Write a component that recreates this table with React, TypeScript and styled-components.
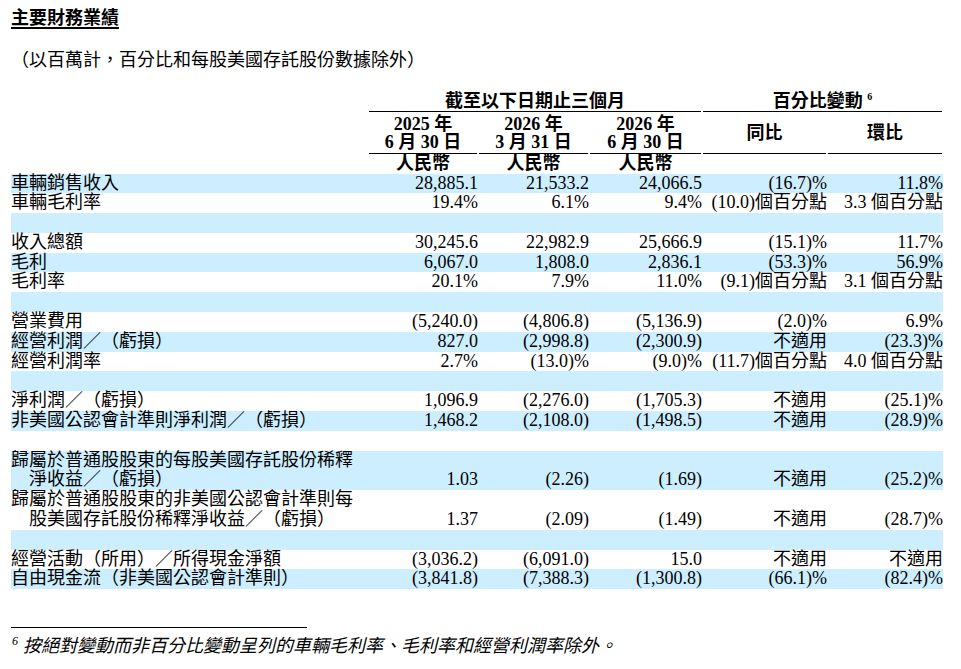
import React from "react";
import styled, { createGlobalStyle } from "styled-components";

type RowData = {
  label: string[];
  values: string[];
};

const COLS = "357px 110px 111px 113px 125px 116px";
const LINE = "19.8px";

const rows: RowData[] = [
  { label: ["車輛銷售收入"], values: ["28,885.1", "21,533.2", "24,066.5", "(16.7)%", "11.8%"] },
  { label: ["車輛毛利率"], values: ["19.4%", "6.1%", "9.4%", "(10.0)個百分點", "3.3 個百分點"] },
  { label: [], values: [] },
  { label: ["收入總額"], values: ["30,245.6", "22,982.9", "25,666.9", "(15.1)%", "11.7%"] },
  { label: ["毛利"], values: ["6,067.0", "1,808.0", "2,836.1", "(53.3)%", "56.9%"] },
  { label: ["毛利率"], values: ["20.1%", "7.9%", "11.0%", "(9.1)個百分點", "3.1 個百分點"] },
  { label: [], values: [] },
  { label: ["營業費用"], values: ["(5,240.0)", "(4,806.8)", "(5,136.9)", "(2.0)%", "6.9%"] },
  { label: ["經營利潤／（虧損）"], values: ["827.0", "(2,998.8)", "(2,300.9)", "不適用", "(23.3)%"] },
  { label: ["經營利潤率"], values: ["2.7%", "(13.0)%", "(9.0)%", "(11.7)個百分點", "4.0 個百分點"] },
  { label: [], values: [] },
  { label: ["淨利潤／（虧損）"], values: ["1,096.9", "(2,276.0)", "(1,705.3)", "不適用", "(25.1)%"] },
  { label: ["非美國公認會計準則淨利潤／（虧損）"], values: ["1,468.2", "(2,108.0)", "(1,498.5)", "不適用", "(28.9)%"] },
  { label: [], values: [] },
  {
    label: ["歸屬於普通股股東的每股美國存託股份稀釋", "淨收益／（虧損）"],
    values: ["1.03", "(2.26)", "(1.69)", "不適用", "(25.2)%"],
  },
  {
    label: ["歸屬於普通股股東的非美國公認會計準則每", "股美國存託股份稀釋淨收益／（虧損）"],
    values: ["1.37", "(2.09)", "(1.49)", "不適用", "(28.7)%"],
  },
  { label: [], values: [] },
  { label: ["經營活動（所用）／所得現金淨額"], values: ["(3,036.2)", "(6,091.0)", "15.0", "不適用", "不適用"] },
  { label: ["自由現金流（非美國公認會計準則）"], values: ["(3,841.8)", "(7,388.3)", "(1,300.8)", "(66.1)%", "(82.4)%"] },
];

const periods = [
  ["2025 年", "6 月 30 日"],
  ["2026 年", "3 月 31 日"],
  ["2026 年", "6 月 30 日"],
];

const App: React.FC = () => {
  return (
    <>
      <GlobalStyle />
      <Page>
        <Title>主要財務業績</Title>
        <Subtitle>（以百萬計，百分比和每股美國存託股份數據除外）</Subtitle>

        <Header>
          <HeadRow $height="20px">
            <HeadCell />
            <HeadCell $span={3} $lined>
              <span>截至以下日期止三個月</span>
            </HeadCell>
            <HeadCell $span={2} $lined>
              <span>
                百分比變動 <Sup>6</Sup>
              </span>
            </HeadCell>
          </HeadRow>
          <HeadRow $height="39px" $pad>
            <HeadCell />
            {periods.map((p, i) => (
              <HeadCell key={i} $lined>
                <PeriodLine>{p[0]}</PeriodLine>
                <PeriodLine>{p[1]}</PeriodLine>
              </HeadCell>
            ))}
            <HeadCell $lined>同比</HeadCell>
            <HeadCell $lined>環比</HeadCell>
          </HeadRow>
          <HeadRow $height="20px">
            <HeadCell />
            <HeadCell>人民幣</HeadCell>
            <HeadCell>人民幣</HeadCell>
            <HeadCell>人民幣</HeadCell>
            <HeadCell />
            <HeadCell />
          </HeadRow>
        </Header>

        {rows.map((row, i) => (
          <Row key={i} $shade={i % 2 === 0}>
            <Label>
              {row.label.map((line, j) => (
                <LabelLine key={j} $indent={j > 0}>
                  {line}
                </LabelLine>
              ))}
            </Label>
            {row.values.map((v, j) => (
              <Value key={j}>{v}</Value>
            ))}
          </Row>
        ))}

        <FootRule />
        <FootText>
          <FootSup>6</FootSup>
          按絕對變動而非百分比變動呈列的車輛毛利率、毛利率和經營利潤率除外。
        </FootText>
      </Page>
    </>
  );
};

const GlobalStyle = createGlobalStyle`
  html, body {
    margin: 0;
    padding: 0;
    background: #fff;
  }
  body {
    font-family: "Liberation Serif", "Noto Sans CJK TC", serif;
    color: #000;
    font-size: 18px;
  }
`;

const Page = styled.div`
  width: 932px;
  padding-left: 11px;
`;

const Title = styled.div`
  margin-top: 8px;
  line-height: 20px;
  font-weight: bold;
  text-decoration: underline;
  text-decoration-thickness: 1.5px;
  text-underline-offset: 3px;
`;

const Subtitle = styled.div`
  margin-top: 22px;
  line-height: 20px;
`;

const Header = styled.div`
  margin-top: 21px;
`;

const HeadRow = styled.div<{ $pad?: boolean; $height: string }>`
  display: grid;
  grid-template-columns: ${COLS};
  line-height: 19px;
  padding-top: ${(p) => (p.$pad ? "1.5px" : "0")};
  & > div {
    height: ${(p) => p.$height};
  }
`;

const HeadCell = styled.div<{ $span?: number; $lined?: boolean }>`
  grid-column: span ${(p) => p.$span || 1};
  margin: 0 1px;
  border-bottom: ${(p) => (p.$lined ? "1.5px solid #000" : "0 solid transparent")};
  font-weight: bold;
  text-align: center;
  white-space: nowrap;
  display: flex;
  flex-direction: column;
  justify-content: center;
  align-items: center;
`;

const PeriodLine = styled.div`
  line-height: 18.5px;
`;

const Sup = styled.span`
  font-size: 10px;
  vertical-align: 7px;
  line-height: 0;
`;

const Row = styled.div<{ $shade: boolean }>`
  display: grid;
  grid-template-columns: ${COLS};
  min-height: ${LINE};
  line-height: ${LINE};
  background: ${(p) => (p.$shade ? "#cceeff" : "transparent")};
`;

const Label = styled.div`
  white-space: nowrap;
`;

const LabelLine = styled.div<{ $indent: boolean }>`
  padding-left: ${(p) => (p.$indent ? "1em" : "0")};
`;

const Value = styled.div`
  align-self: end;
  text-align: right;
  white-space: nowrap;
`;

const FootRule = styled.div`
  margin-top: 38px;
  width: 296px;
  border-top: 1px solid #000;
`;

const FootText = styled.div`
  margin-top: 8px;
  line-height: 20px;
  font-style: italic;
  white-space: nowrap;
`;

const FootSup = styled.span`
  font-size: 12px;
  vertical-align: 7px;
  line-height: 0;
  margin: 0 5px 0 1px;
`;

export default App;
